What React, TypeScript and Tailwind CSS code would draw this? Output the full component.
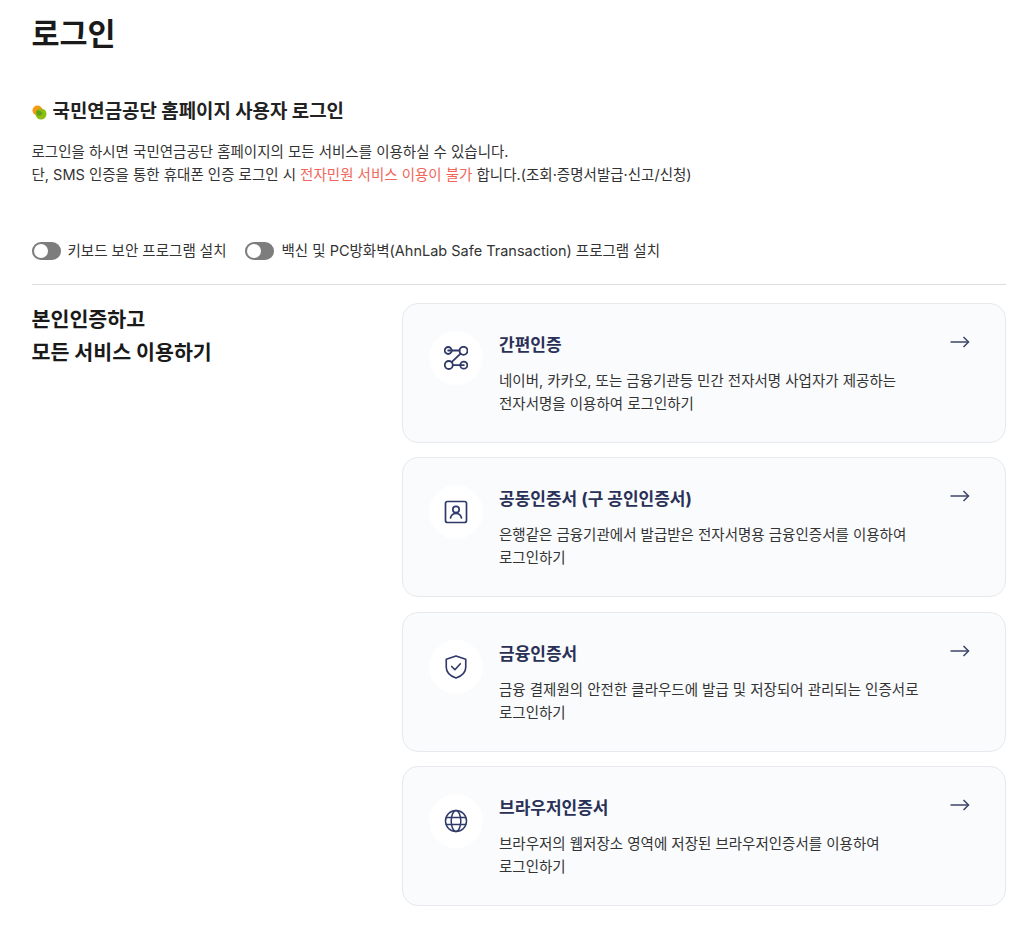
import type { ReactNode } from "react";

const FONT = { fontFamily: '"Inter", "Noto Sans CJK KR", sans-serif' };

const IconLink = () => (
  <svg viewBox="0 0 24 24" className="h-[24px] w-[24px]" fill="none" stroke="#2f3a68" strokeWidth="1.8" strokeLinecap="round">
    <circle cx="4.200" cy="4.500" r="3.500" />
    <circle cx="19.500" cy="4.800" r="4" />
    <circle cx="4.800" cy="19" r="4" />
    <circle cx="19.800" cy="19.200" r="3.500" />
    <path d="M4.200 4.500H15.500" />
    <path d="M8.800 19.200H19.800" />
    <path d="M16.600 7.600L7.600 16.200" />
  </svg>
);

const IconCert = () => (
  <svg viewBox="0 0 24 24" className="h-[24px] w-[24px]" fill="none" stroke="#2f3a68" strokeWidth="1.700" strokeLinecap="round" strokeLinejoin="round">
    <rect x="1.500" y="1.500" width="21" height="21" rx="2" />
    <circle cx="12" cy="9.500" r="3.200" />
    <path d="M6.500 18c.6-3 2.800-4.500 5.500-4.500s4.900 1.500 5.500 4.500" />
  </svg>
);

const IconShield = () => (
  <svg viewBox="0 0 24 24" className="h-[26px] w-[26px]" fill="none" stroke="#2f3a68" strokeWidth="1.5" strokeLinecap="round" strokeLinejoin="round">
    <path d="M12 1.800L3 4.800v7.400c0 4.800 4 8.200 9 10 5-1.800 9-5.200 9-10V4.800z" />
    <path d="M8 11.500l3 3 5-5.500" />
  </svg>
);

const IconGlobe = () => (
  <svg viewBox="0 0 24 24" className="h-[24px] w-[24px]" fill="none" stroke="#2f3a68" strokeWidth="1.5" strokeLinecap="round">
    <circle cx="12" cy="12" r="10.500" />
    <ellipse cx="12" cy="12" rx="4.800" ry="10.500" />
    <path d="M2.300 8.500h19.400" />
    <path d="M2.300 15.500h19.400" />
  </svg>
);

const Arrow = () => (
  <svg viewBox="0 0 20 12" className="h-3 w-5" fill="none" stroke="#3d4668" strokeWidth="1.500">
    <path d="M0.500 6H18.500" />
    <path d="M13.500 1l5 5-5 5" />
  </svg>
);

const Toggle = ({ label }: { label: string }) => (
  <div className="flex items-center gap-[7px]">
    <span className="flex h-[18px] w-[29px] items-center rounded-full bg-[#7d7d7d] pl-[2px]">
      <span className="h-[14px] w-[14px] rounded-full bg-white" />
    </span>
    <span className="text-[14.500px] text-[#333333]">{label}</span>
  </div>
);

const CARDS: { title: string; lines: string[]; icon: ReactNode }[] = [
  {
    title: "간편인증",
    lines: ["네이버, 카카오, 또는 금융기관등 민간 전자서명 사업자가 제공하는", "전자서명을 이용하여 로그인하기"],
    icon: <IconLink />,
  },
  {
    title: "공동인증서 (구 공인인증서)",
    lines: ["은행같은 금융기관에서 발급받은 전자서명용 금융인증서를 이용하여", "로그인하기"],
    icon: <IconCert />,
  },
  {
    title: "금융인증서",
    lines: ["금융 결제원의 안전한 클라우드에 발급 및 저장되어 관리되는 인증서로", "로그인하기"],
    icon: <IconShield />,
  },
  {
    title: "브라우저인증서",
    lines: ["브라우저의 웹저장소 영역에 저장된 브라우저인증서를 이용하여", "로그인하기"],
    icon: <IconGlobe />,
  },
];

export default function App() {
  return (
    <div className="h-[925px] overflow-hidden bg-white pl-[31.500px] pr-[18px]" style={FONT}>
      <h1 className="pt-[12px] text-[30.500px] leading-[44px] font-bold text-[#1a1a1a]">로그인</h1>

      <div className="mt-[43px] flex items-center gap-[6px]">
        <svg viewBox="0 0 15 15" className="h-[15px] w-[15px]">
          <circle cx="5.500" cy="5.500" r="5" fill="#f59a14" />
          <circle cx="9" cy="9" r="5.500" fill="#8fbe12" />
          <path d="M5 5.500a5 5 0 0 1 5.500 3.500 5 5 0 0 1-5 1.500 5 5 0 0 1-1-5z" fill="#3f8f1f" opacity="0.6" />
        </svg>
        <h2 className="text-[18.900px] leading-[26px] font-bold text-[#222222]">국민연금공단 홈페이지 사용자 로그인</h2>
      </div>

      <div className="mt-[15px] text-[14.500px] leading-[23px] text-[#333333]">
        <p>로그인을 하시면 국민연금공단 홈페이지의 모든 서비스를 이용하실 수 있습니다.</p>
        <p>
          단, SMS 인증을 통한 휴대폰 인증 로그인 시 <span className="text-[#f0665a]">전자민원 서비스 이용이 불가</span> 합니다.(조회·증명서발급·신고/신청)
        </p>
      </div>

      <div className="mt-[54px] flex items-center gap-[19px]">
        <Toggle label="키보드 보안 프로그램 설치" />
        <Toggle label="백신 및 PC방화벽(AhnLab Safe Transaction) 프로그램 설치" />
      </div>

      <div className="mt-[22px] flex border-t border-[#dddddd] pt-[18px]">
        <h3 className="w-[370.500px] shrink-0 text-[20.600px] leading-[33px] font-bold text-[#1a1a1a]">
          본인인증하고
          <br />
          모든 서비스 이용하기
        </h3>
        <div className="flex flex-1 flex-col gap-[14.500px]">
          {CARDS.map((c) => (
            <div key={c.title} className="flex h-[140px] items-start rounded-[16px] border border-[#e8e9ec] bg-[#fafbfd] pt-[27px] pl-[26px] pr-[35px]">
              <div className="flex h-[54px] w-[54px] shrink-0 items-center justify-center rounded-full bg-white">{c.icon}</div>
              <div className="ml-[16px] flex-1 mt-[2px]">
                <div className="text-[17px] leading-[24px] font-bold text-[#2a3157]">{c.title}</div>
                <div className="mt-[12px] text-[14.500px] leading-[23px] text-[#333333]">
                  {c.lines.map((l) => (
                    <p key={l}>{l}</p>
                  ))}
                </div>
              </div>
              <div className="-mt-[1px] pt-[6px]">
                <Arrow />
              </div>
            </div>
          ))}
        </div>
      </div>
    </div>
  );
}
